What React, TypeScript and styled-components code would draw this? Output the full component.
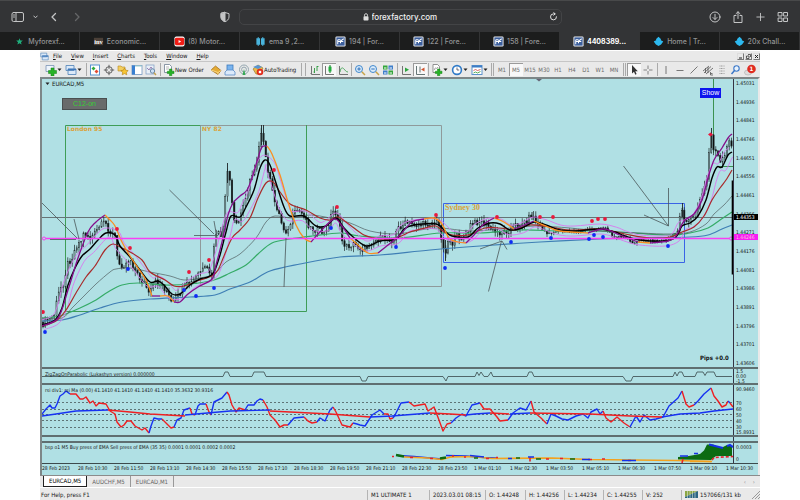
import React from "react";
import styled, { createGlobalStyle, css } from "styled-components";

const BG = "#b0e0e4";
const UI = '"DejaVu Sans Condensed", "DejaVu Sans", sans-serif';

const Global = createGlobalStyle`
  * { box-sizing: border-box; }
  body { margin: 0; background: #fff; font-family: Inter, sans-serif; }
  button, input { font: inherit; color: inherit; background: none; border: 0; padding: 0; margin: 0; }
  svg { display: block; }
`;

/* ---------- browser ---------- */

const Browser = styled.header`
  background: #333436;
  border-top: 1px solid #48494a;
`;
const NavBar = styled.div`
  display: grid;
  grid-template-columns: 1fr minmax(0, 323px) 1fr;
  align-items: center;
  height: 31px;
  padding: 0 11px;
  color: #c4c5c6;
`;
const NavGroup = styled.div<{ $end?: boolean; $gap: number }>`
  display: flex;
  align-items: center;
  gap: ${(p) => p.$gap}px;
  justify-content: ${(p) => (p.$end ? "flex-end" : "flex-start")};
`;
const IconButton = styled.button<{ $dim?: boolean; $push?: boolean }>`
  display: flex;
  opacity: ${(p) => (p.$dim ? 0.35 : 1)};
  ${(p) => p.$push && css`margin-left: auto; margin-right: 8px;`}
`;
const Address = styled.div`
  display: flex;
  align-items: center;
  justify-content: center;
  gap: 3px;
  height: 16px;
  position: relative;
  border: 1px solid #434446;
  border-radius: 5px;
  color: #f0f0f0;
  font-size: 8px;
  font-weight: 500;
  & > button { position: absolute; right: 3px; }
`;
const Url = styled.input`
  width: 66px;
  height: 12px;
  outline: none;
`;
const Tabs = styled.nav`
  display: grid;
  grid-template-columns: repeat(10, 1fr);
  height: 18px;
  background: #1c1d1d;
`;
const Tab = styled.button<{ $active?: boolean }>`
  display: flex;
  align-items: center;
  justify-content: center;
  gap: 3px;
  border-right: 1px solid #333435;
  background: ${(p) => (p.$active ? "#333436" : "transparent")};
  color: ${(p) => (p.$active ? "#fff" : "#929394")};
  font-size: 7px;
  font-weight: ${(p) => (p.$active ? 700 : 500)};
  white-space: nowrap;
`;

const Line = ({ w = 12, h = 12, vb = "0 0 12 12", children }: { w?: number; h?: number; vb?: string; children: React.ReactNode }) => (
  <svg width={w} height={h} viewBox={vb} fill="none" stroke="currentColor" strokeWidth="1" strokeLinecap="round" strokeLinejoin="round">
    {children}
  </svg>
);

const favicons: Record<string, React.ReactNode> = {
  star: <path d="M6 2.4l1 2.5 2.6.1-2 1.7.7 2.6L6 7.9 3.7 9.3l.7-2.6-2-1.7L5 4.9z" fill="#1fae7c" />,
  inv: (
    <>
      <rect x="1" y="2" width="10" height="8" fill="#4b4038" />
      <text x="6" y="8.6" textAnchor="middle" fontFamily="Liberation Serif" fontWeight="700" fontSize="7" fill="#fff">inv</text>
    </>
  ),
  tube: (
    <>
      <rect x=".5" y=".5" width="11" height="11" rx="2" fill="#fff" />
      <rect x="1" y="2" width="10" height="8" rx="1.5" fill="#f01d16" />
      <path d="M5 4.3v3.4L7.8 6z" fill="#fff" />
    </>
  ),
  candles: <path d="M1.500 2.500h4v7h-4zM6.500 2.500h4v7h-4zM3 1h1v10H3zM8 1h1v10H8z" fill="#49b4dc" />,
  ff: (
    <>
      <rect x=".5" y=".5" width="11" height="11" rx="1.5" fill="#f3f5f8" />
      <rect x="1.5" y="1.5" width="9" height="9" fill="#3c5f9c" />
      <path d="M3 4h3M3 6h2.500M3 4v5M6 8V5.5L9.500 3M6.500 6H9" stroke="#fff" strokeWidth="1.100" fill="none" />
    </>
  ),
  ship: <path d="M6 .8l2.600 2.400v1.300L11.200 6 8.800 9.300 6 11 3.200 9.300.8 6l2.600-1.500V3.200z" fill="#2db9ef" />,
};
const tabList: [string, string][] = [
  ["star", "Myforexf..."],
  ["inv", "Economic..."],
  ["tube", "(8) Motor..."],
  ["candles", "ema 9 ,2..."],
  ["ff", "194 | For..."],
  ["ff", "122 | Fore..."],
  ["ff", "158 | Fore..."],
  ["ff", "4408389..."],
  ["ship", "Home | Tr..."],
  ["ship", "20x Chall..."],
];

/* ---------- terminal ---------- */

const Terminal = styled.main`
  margin: 1px 5% 0;
  background: #e9e9e9;
  font-family: ${UI};
  font-size: 6px;
  line-height: 8px;
  color: #161616;
`;
const MenuBar = styled.div`
  display: flex;
  align-items: center;
  height: 10px;
`;
const MenuItem = styled.button`
  margin-left: 4px;
  margin-right: 5px;
  &::first-letter { text-decoration: underline; }
`;
const WindowButtons = styled.div`
  display: flex;
  gap: 1px;
  margin-left: auto;
`;
const WindowButton = styled.button`
  display: flex;
  width: 7px;
  height: 7px;
  border: 1px solid #777;
  border-top-color: #ddd;
  border-left-color: #ddd;
`;
const ToolBar = styled.div`
  display: flex;
  align-items: center;
  height: 16px;
  overflow: hidden;
  border-top: 1px solid #c6c6c6;
  padding-left: 4px;
`;
const Tool = styled.button<{ $pressed?: boolean; $w?: number }>`
  display: flex;
  flex: none;
  align-items: center;
  justify-content: ${(p) => (p.$w ? "flex-start" : "center")};
  width: ${(p) => p.$w ?? 14}px;
  height: 13px;
  padding-left: ${(p) => (p.$w ? 1 : 0)}px;
  white-space: nowrap;
  ${(p) => p.$pressed && css`
    background: #f8f8f8;
    box-shadow: inset 1px 1px 0 #9a9a9a;
  `}
`;
const Frame = styled(Tool)`
  color: #6c6c6c;
  font-size: 6px;
`;
const Divider = styled.span<{ $w: number; $double?: boolean }>`
  flex: none;
  width: ${(p) => p.$w}px;
  height: 13px;
  background: linear-gradient(#aaa, #aaa) ${(p) => (p.$double ? "30%" : "50%")} 0 / 1px 100% no-repeat
    ${(p) => p.$double && ", linear-gradient(#aaa, #aaa) 80% 0 / 1px 100% no-repeat"};
`;

const ChartFrame = styled.section`
  background: ${BG};
  border: solid #7d8788;
  border-width: 2px 0 0 2px;
  border-right: 2px solid #e9e9e9;
`;
const Pane = styled.div<{ $last?: boolean }>`
  display: grid;
  grid-template-columns: minmax(0, 1fr) 24px;
  position: relative;
  border-bottom: ${(p) => (p.$last ? "1px solid #3d4a4c" : "2px solid #5f6f71")};
`;
const Plot = styled.svg`
  width: 100%;
  height: auto;
  border-right: 1px solid #334;
`;
const Scale = styled.div`
  position: relative;
  display: flex;
  flex-direction: column;
  justify-content: space-between;
  padding: 1px 0 0 2px;
  font-size: 5px;
  line-height: 7px;
  white-space: nowrap;
  min-height: 0;
`;
const Mark = styled.span<{ $top: number; $bg?: string; $fg?: string }>`
  position: absolute;
  left: 0;
  right: 0;
  top: ${(p) => p.$top}%;
  padding-left: 2px;
  line-height: ${(p) => (p.$bg ? 6 : 5)}px;
  transform: translateY(-50%);
  background: ${(p) => p.$bg ?? "transparent"};
  color: ${(p) => p.$fg ?? "inherit"};
`;
const PaneTitle = styled.span<{ $top?: number }>`
  position: absolute;
  left: 3px;
  top: ${(p) => p.$top ?? 2}px;
  font-size: 5px;
  line-height: 7px;
  white-space: nowrap;
`;
const ChartTitle = styled(PaneTitle)`
  display: flex;
  align-items: center;
  gap: 2px;
  font-size: 6px;
`;
const IndicatorButton = styled.button`
  position: absolute;
  left: 20px;
  top: 19px;
  width: 45px;
  height: 12px;
  border: 1px solid #4a4f50;
  background: #696b6b;
  color: #35d035;
  font-family: "Liberation Sans", sans-serif;
  font-size: 7px;
  line-height: 10px;
`;
const ShowButton = styled.button`
  position: absolute;
  right: 37px;
  top: 9px;
  width: 21px;
  height: 10px;
  background: #0d14ee;
  color: #fff;
  font-family: "Liberation Sans", sans-serif;
  font-size: 7px;
`;
const TimeAxis = styled.div`
  display: grid;
  grid-template-columns: repeat(19, minmax(0, 36fr)) minmax(0, 32fr);
  height: 11px;
  font-size: 5px;
  line-height: 9px;
  white-space: nowrap;
`;
const Sheets = styled.div`
  display: flex;
  height: 13px;
  border-top: 1px solid #8b8b8b;
  border-bottom: 1px solid #fff;
`;
const Sheet = styled.button<{ $active?: boolean }>`
  height: 11px;
  padding: 0 5px;
  border-right: 1px solid ${(p) => (p.$active ? "#222" : "#999")};
  color: ${(p) => (p.$active ? "#000" : "#666")};
  ${(p) => p.$active && css`
    background: #fff;
    border-left: 1px solid #222;
    border-bottom: 1px solid #222;
    margin-left: 3px;
  `}
`;
const Scrollers = styled.div`
  display: flex;
  gap: 7px;
  margin-left: auto;
  padding-right: 5px;
  color: #888;
`;
const Status = styled.footer`
  display: grid;
  grid-template-columns: 327fr 62fr 56fr 40fr 39fr 39fr 39fr 118fr;
  align-items: center;
  height: 13px;
  white-space: nowrap;
`;
const Cell = styled.span<{ $first?: boolean }>`
  display: flex;
  align-items: center;
  gap: 2px;
  height: 10px;
  padding-left: ${(p) => (p.$first ? 1 : 3)}px;
  border-left: ${(p) => (p.$first ? "0" : "1px solid #b4b4b4")};
`;
const Connection = styled(Cell)`
  margin-left: 16px;
`;
const Grip = styled.svg`
  margin-left: auto;
`;

/* ---------- toolbar icons ---------- */

const icons: Record<string, React.ReactNode> = {
  newChart: <><path d="M1 1.500h8v6H1z" fill="#eef4fb" stroke="#7a93b5" strokeWidth=".8" /><path d="M6 4h3v2.500h2.500v3H9V12H6V9.500H3.500v-3H6z" fill="#27b227" stroke="#128312" strokeWidth=".5" /></>,
  profiles: <><path d="M1 1.500h8v5H1zM3 5h8v5.500H3z" fill="#dbe9f8" stroke="#5d8cbd" strokeWidth=".9" /><path d="M3 5.500h8" stroke="#3d77bb" strokeWidth="1.500" /></>,
  market: <><rect x="1.500" y="1" width="9" height="10" fill="#fff" stroke="#5b94d0" /><path d="M4.500 2.500l2 2-2 2-2-2z" fill="#2faa3a" /><path d="M7.500 5.500l2 2-2 2-2-2z" fill="#e34a32" /></>,
  target: <g stroke="#555" strokeWidth=".9" fill="none"><circle cx="6" cy="6" r="3.300" /><path d="M6 .8v4M6 7.200v4M.8 6h4M7.200 6h4" /></g>,
  folders: <><path d="M1 2h3l1 1h3v4H1z" fill="#f3ce60" stroke="#b88c1e" strokeWidth=".6" /><path d="M7.500 4l1.200 2.200 2.500.4-1.800 1.700.4 2.500-2.300-1.200-2.300 1.200.4-2.500-1.800-1.700 2.500-.4z" fill="#f7c531" stroke="#b07d12" strokeWidth=".6" /></>,
  navigator: <><rect x="1" y="1.500" width="10" height="9" fill="#fff" stroke="#7396c0" strokeWidth=".8" /><path d="M1 1.500h3v9H1z" fill="#397fd0" /><path d="M4 2h7" stroke="#9cc" /></>,
  tester: <><rect x="1" y="1" width="8" height="9" fill="#e9eff6" stroke="#7c9cc2" strokeWidth=".7" /><path d="M2 4l2 2 2-3 2 3" stroke="#759" strokeWidth=".7" fill="none" /><circle cx="7.500" cy="7" r="2.200" fill="#cce0f5" stroke="#6c8aa8" /><path d="M9 8.700l2 2.300" stroke="#c3a14e" strokeWidth="1.400" /></>,
  order: <><path d="M1.500.5h5l2 2v6h-7z" fill="#fff" stroke="#6f7f92" strokeWidth=".8" /><path d="M3 3h3M3 5h3" stroke="#888" strokeWidth=".6" /><path d="M6.500 5h2.300v2.200H11v2.300H8.800v2.300H6.500V9.500H4.300V7.200h2.200z" fill="#25b325" stroke="#128312" strokeWidth=".5" /></>,
  gold: <><path d="M1 6l4.500-4L11 6.500l-3 4z" fill="#e4ab35" stroke="#9c6714" strokeWidth=".7" /><path d="M1 6l7 2.500 3-2M8 8.500v2" stroke="#fbe29a" strokeWidth=".8" fill="none" /></>,
  editor: <><rect x="3" y="1" width="6" height="6" fill="#7ab4ee" stroke="#3d7abd" strokeWidth=".8" /><path d="M1 8l2-2h6l2 2v3H1z" fill="#dceafa" stroke="#5b8dc6" strokeWidth=".8" /></>,
  signal: <><g fill="none" stroke="#8a9ea8" strokeWidth=".9"><circle cx="6" cy="5.500" r="4.500" /><circle cx="6" cy="5.500" r="2.400" /></g><path d="M6 5l1.500 6h-3z" fill="#35a852" /></>,
  auto: <><path d="M1 5l5-4 5 3-3 6H4z" fill="#e9bb4b" stroke="#8f701e" strokeWidth=".6" /><path d="M1 3l5-2 4 2-4 2z" fill="#5a95d1" /><circle cx="8" cy="8" r="3.300" fill="#e02c1c" /><rect x="6.800" y="6.800" width="2.400" height="2.400" fill="#fff" /></>,
  bars: <g fill="none" strokeWidth=".9"><path d="M2.500 2v8.500H11M1.500 9.500h1" stroke="#666" /><path d="M5.500 4v5M8 2v5M8 2.500h1.500M4.500 8h1" stroke="#299a3a" /></g>,
  candle: <><path d="M2.500 2v8.500H11" stroke="#666" strokeWidth=".9" fill="none" /><path d="M7 1v8" stroke="#137a25" /><rect x="5.500" y="2.500" width="3" height="5" rx=".5" fill="#22ad3e" /></>,
  line: <g fill="none" strokeWidth=".9"><path d="M2.500 2v8.500H11" stroke="#666" /><path d="M3 8c1-6 3-4 4-3s2 3 4 3" stroke="#46a557" /></g>,
  zoomIn: <><circle cx="5" cy="5" r="3.500" fill="#d9ebfb" stroke="#4288cc" /><path d="M5 3.300v3.400M3.300 5h3.400" stroke="#2e6fb8" /><path d="M7.800 7.800L11 11" stroke="#c7a247" strokeWidth="1.500" /></>,
  zoomOut: <><circle cx="5" cy="5" r="3.500" fill="#d9ebfb" stroke="#4288cc" /><path d="M3.300 5h3.400" stroke="#2e6fb8" /><path d="M7.800 7.800L11 11" stroke="#c7a247" strokeWidth="1.500" /></>,
  tile: <><path d="M1 1.500h4.500v4H1zM6.500 6.500H11v4H6.500z" fill="#35a63d" /><path d="M6.500 1.500H11v4H6.500zM1 6.500h4.500v4H1z" fill="#3f7fca" /><path d="M2 4h2.500M7.500 4H10M2 9h2.500M7.500 9H10" stroke="#fff" /></>,
  scroll: <><path d="M2.500 2v8.500H11" stroke="#666" strokeWidth=".9" fill="none" /><path d="M5 3.500v4.500l4-2.200z" fill="#2ba43d" /></>,
  shift: <><path d="M2.500 2v8.500H11M6 2.500v6" stroke="#566" strokeWidth=".9" fill="none" /><path d="M10.500 3.500v4L7 5.500z" fill="#d2542f" /></>,
  indicator: <><path d="M2 .5h4.500l2 2v6H2z" fill="#fff" stroke="#777" strokeWidth=".8" /><path d="M3.500 6c1-5 2 1 3.500-3" stroke="#777" strokeWidth=".7" fill="none" /><path d="M6.500 5h2.300v2.200H11v2.300H8.800v2.300H6.500V9.500H4.300V7.200h2.200z" fill="#25b325" stroke="#128312" strokeWidth=".5" /></>,
  clock: <><circle cx="6" cy="6" r="4.400" fill="#fff" stroke="#317bc8" strokeWidth="1.600" /><path d="M6 3.500V6h2.200" stroke="#445" strokeWidth=".8" fill="none" /></>,
  template: <><rect x="1" y="1.500" width="10" height="9" fill="#fff" stroke="#5d91cb" /><path d="M1 2.500h10" stroke="#3d7dc6" strokeWidth="2" /><path d="M2.500 6.500l2-1 2 1 3-1" stroke="#c44" strokeWidth=".8" fill="none" /><path d="M2.500 9l2-1 2 1 3-1.500" stroke="#393" strokeWidth=".8" fill="none" /></>,
  cursor: <path d="M4 1v8.500l2-1.800 1.300 3 1.300-.6-1.300-2.900h2.500z" fill="#333" />,
  cross: <path d="M6 1.500v3.500M6 7v3.500M1.500 6H5M7 6h3.500" stroke="#777" strokeWidth=".9" />,
  vline: <path d="M6 2v8" stroke="#777" />,
  hline: <path d="M2.500 6.500h7" stroke="#777" />,
  trend: <path d="M2.500 9.500l7-7" stroke="#777" />,
  channel: <path d="M1 7l6-5M2 9l7-6.500M4 10l7-6M3.500 4v5M6 3v6M8.500 8v3h2.500M8.500 9.500h2" stroke="#555" strokeWidth=".8" fill="none" />,
  fib: <path d="M3.500 2h5M3.500 4.500h5M3.500 7h5M3.500 9.500h5" stroke="#888" strokeWidth=".8" strokeDasharray="1 .5" />,
  search: <><circle cx="6.500" cy="4.500" r="2.700" fill="#e8f2fd" stroke="#3b78c7" strokeWidth="1.100" /><path d="M4.500 6.600L1.500 10" stroke="#3b78c7" strokeWidth="1.500" /></>,
  alert: <><ellipse cx="4" cy="8.500" rx="3.500" ry="2.500" fill="#ddd" stroke="#aaa" strokeWidth=".6" /><circle cx="7.500" cy="5" r="4.300" fill="#df2c20" /><text x="7.500" y="7.300" textAnchor="middle" fontSize="6" fontWeight="700" fill="#fff">1</text></>,
};
const Glyph = ({ n, size = 12 }: { n: string; size?: number }) => <svg width={size} height={size} viewBox="0 0 12 12">{icons[n]}</svg>;
const Caret = () => <svg width="5" height="4" viewBox="0 0 5 4"><path d="M.5.500h4L2.500 3z" fill="#222" /></svg>;
const tools = (names: string[], pressed?: string) =>
  names.map((n) => <Tool key={n} aria-label={n} $pressed={n === pressed}><Glyph n={n} /></Tool>);
const DropTool = ({ n }: { n: string }) => <Tool $w={20} aria-label={n}><Glyph n={n} /><Caret /></Tool>;

/* ---------- chart data ---------- */

type P = [number, number];
const pts = (s: string): P[] => s.trim().split(/\s+/).map((p) => p.split(",").map(Number) as P);

const price = pts(`42,325 48,320 54,316 58,295 61,287 64,283 67,264 72,258 76,246 82,240 84,232 90,238 96,232 100,226 105,222 110,232 115,236 117,257 120,265
 125,265 130,258 135,270 140,279 145,283 149,295 155,282 162,285 167,292 172,304 178,297 184,286 192,283 197,275 202,270 208,269 212,278 214,245
 217,233 222,236 224,218 227,172 229,175 231,195 234,220 238,226 242,205 246,200 250,178 254,170 258,155 261,136 263,138 266,160 270,180 274,200 278,210
 283,228 288,232 292,218 297,210 304,215 310,228 318,230 326,234 330,218 334,210 338,218 342,240 346,247 354,244 364,250 372,242 382,238 394,240 398,228
 406,223 418,225 430,223 438,222 441,235 444,252 446,250 449,238 453,244 456,235 462,238 468,232 471,224 480,221 488,226 494,232 502,233 510,230 516,225
 524,223 532,214 536,222 542,228 548,235 556,230 570,232 590,230 604,227 612,235 625,238 632,242 645,240 655,241 665,240 672,237 678,232 680,215 682,208
 685,224 690,220 696,212 700,198 704,190 707,175 709,155 711,135 714,150 720,160 725,155 728,140 732,148`);
const black = pts(`42,325 55,320 62,308 68,285 75,268 82,256 90,249 98,240 106,233 115,235 120,246 130,257 140,270 150,282 158,281 164,285 172,294 180,294 190,285
 200,279 208,277 214,272 220,255 226,232 231,216 240,217 246,207 254,190 260,168 265,160 270,165 276,183 284,207 290,216 304,216 316,226 326,226 336,218
 344,228 352,236 366,246 380,241 396,239 404,229 414,225 436,224 446,232 452,236 468,237 478,228 490,223 500,224 510,230 522,228 534,222 546,225 560,230
 575,231 600,229 615,232 625,236 640,240 665,241 676,237 682,226 690,223 698,216 706,200 712,178 717,167 722,167 728,155 732,152`);
const brown = pts(`42,326 56,321 66,310 76,293 86,277 95,266 105,250 113,244 122,248 130,252 142,260 150,272 165,280 174,286 184,286 200,280 212,276 218,270 224,256
 232,238 240,230 250,218 258,198 266,183 273,182 280,192 290,204 306,210 320,218 330,220 338,217 350,225 364,235 380,239 396,238 410,232 425,228 436,226 448,234
 468,235 485,228 500,228 515,230 530,225 550,227 570,230 600,229 625,234 650,238 670,237 682,232 694,227 704,216 712,200 720,188 726,180 732,170`);
const gray = pts(`42,318 62,318 72,308 84,296 96,284 110,272 116,269 130,268 150,272 170,276 184,280 200,278 214,274 226,262 240,254 256,238 266,222 275,216 292,218
 310,215 330,218 350,223 370,231 396,234 420,230 440,228 470,231 500,229 535,226 570,228 600,231 640,233 670,234 690,232 706,224 714,214 724,205 732,196`);
const green = pts(`42,318 60,316 80,308 96,300 108,292 122,285 138,283 165,285 190,284 214,280 230,273 246,265 258,254 272,243 290,239 312,236 340,233 360,236 400,238
 440,233 480,233 520,230 560,231 600,231 665,235 690,233 708,228 720,220 732,212`);
const blue = pts(`42,321 62,320 80,315 100,308 122,302 150,299 190,297 215,295 230,289 250,282 270,271 300,264 340,257 380,255 430,250 480,246 540,242 600,239 640,238
 690,237 708,235 722,229 732,225`);
const fast: [string, string][] = [
  ["p", "42,326 58,318 68,290 78,258 88,232 96,222 105,215"],
  ["o", "105,215 110,220 115,226 122,242 130,256 138,268 146,280 152,296"],
  ["p", "152,296 160,296"],
  ["o", "160,296 168,296 174,302"],
  ["p", "174,302 180,302 188,294 198,287 212,279 216,265 222,242 228,215 233,203 240,196 247,190 253,175 258,158 262,147 267,146"],
  ["o", "267,146 272,154 280,175 288,202 296,225 304,238 311,242"],
  ["p", "311,242 320,232 334,219 342,226 350,238"],
  ["o", "350,238 358,245 368,253 378,253"],
  ["p", "378,253 388,245 400,235 412,222 424,219"],
  ["o", "424,219 434,218 442,224 449,238 458,242 466,243"],
  ["p", "466,243 474,235 484,224 494,218"],
  ["o", "494,218 504,222 514,229"],
  ["p", "514,229 524,225 534,221"],
  ["o", "534,221 548,227 560,231 588,233"],
  ["p", "588,233 604,229 620,235 638,242"],
  ["o", "638,242 650,243"],
  ["p", "650,243 668,241 676,236 684,221 694,214 702,200 708,178 714,160 722,148 728,138 732,134"],
];

const smooth = (p: P[]) => {
  let d = `M${p[0]}`;
  for (let i = 0; i < p.length - 1; i++) {
    const a = p[i - 1] ?? p[i], b = p[i], c = p[i + 1], e = p[i + 2] ?? c;
    d += `C${b[0] + (c[0] - a[0]) / 6},${b[1] + (c[1] - a[1]) / 6} ${c[0] - (e[0] - b[0]) / 6},${c[1] - (e[1] - b[1]) / 6} ${c}`;
  }
  return d;
};
const offset = (p: P[], k: number): P[] =>
  p.map((q, i) => {
    const a = p[i - 1] ?? q, b = p[i + 1] ?? q;
    const dx = b[0] - a[0], dy = b[1] - a[1], l = Math.hypot(dx, dy) || 1;
    return [q[0] - (dy / l) * k, q[1] + (dx / l) * k];
  });
const at = (p: P[], x: number) => {
  const i = Math.max(1, p.findIndex((q) => q[0] >= x));
  const [a, b] = [p[i - 1], p[i]];
  return a[1] + ((b[1] - a[1]) * (x - a[0])) / (b[0] - a[0]);
};
const noise = (n: number) => {
  const v = Math.sin(n * 12.9898) * 43758.5453;
  return v - Math.floor(v) - 0.5;
};
const candles = Array.from({ length: 307 }, (_, i) => {
  const x = 43 + i * 2.25;
  const calm = x > 550 && x < 672 ? 0.5 : 1;
  const open = at(price, Math.max(42, x - 2.25)) + noise(i) * 6 * calm;
  const close = at(price, x) + noise(i + 1) * 6 * calm;
  const top = Math.min(open, close), bottom = Math.max(open, close);
  return {
    x, top, h: Math.max(1, bottom - top), up: close < open,
    high: top - (noise(i + 500) + 0.5) * 6 * calm,
    low: bottom + (noise(i + 900) + 0.5) * 6 * calm,
  };
});

const reds = pts("117,229 130,248 189,272 209,260 274,170 337,207 436,215 497,217 540,217 553,217 592,221 598,219 605,219 43,312");
const blues = pts("45,332 128,269 184,290 196,296 214,288 331,228 396,247 445,268 511,242 551,238 589,239 594,235 603,237 668,246");

const rsi: [string, string][] = [
  ["b", "42,414 46,409 50,405 52,408 55,408 57,404 60,396 63,394 66,391 70,394"],
  ["r", "70,394 76,394 80,399 83,399 86,397 90,403 93,401 96,406 99,403 106,404 110,411 115,414 117,422 121,427 124,425 127,421 131,421 135,426 142,430 145,428 149,433"],
  ["b", "149,433 151,426 154,418 158,419 162,419"],
  ["r", "162,419 167,424 171,428 174,427"],
  ["b", "174,427 177,420 181,418 184,410 190,408"],
  ["r", "190,408 192,414 195,415"],
  ["b", "195,415 198,406 200,404 206,404"],
  ["r", "206,404 209,412 211,415"],
  ["b", "211,415 214,402 222,398 227,392"],
  ["r", "227,392 229,395 232,405 236,412 239,408 245,410"],
  ["b", "245,410 248,405 254,405 257,401 260,399 263,400"],
  ["r", "263,400 267,407 270,415 275,420 280,427 284,425 288,425"],
  ["b", "288,425 294,418 304,417"],
  ["r", "304,417 308,421 312,423 317,422"],
  ["b", "317,422 320,418 325,421 330,410 333,407"],
  ["r", "333,407 336,412 342,425 350,427 353,423"],
  ["b", "353,423 357,424 360,425 365,426 372,415 380,410 384,414"],
  ["r", "384,414 388,414 390,419 393,418"],
  ["b", "393,418 395,415 401,403 409,402"],
  ["r", "409,402 414,406 425,404 428,411 434,407 439,420 443,431 447,424 451,423"],
  ["b", "451,423 456,418 462,414 466,416 472,405 480,403"],
  ["r", "480,403 484,409 490,409 497,417 500,421 508,420"],
  ["b", "508,420 513,413 520,408 526,410 531,401"],
  ["r", "531,401 534,412 541,418 547,424"],
  ["b", "547,424 551,414 556,416 562,419 568,420 576,416 583,414 588,418 591,412 597,409 600,414 603,411"],
  ["r", "603,411 606,418 611,422 617,417 624,423 630,427"],
  ["b", "630,427 636,416 640,422 644,415 650,420 656,419 663,417 669,406 678,398 682,391"],
  ["r", "682,391 686,404 689,407 694,405"],
  ["b", "694,405 698,401 704,394 711,388"],
  ["r", "711,388 714,396 718,401 722,407 726,405 728,401"],
  ["b", "728,401 730,403"],
  ["r", "730,403 733,407"],
  ["b", "42,416 56,414 76,411 108,410"],
  ["r", "108,410 130,412 150,414 185,416"],
  ["b", "185,415 230,411 270,410"],
  ["r", "270,411 330,414 370,417"],
  ["b", "370,417 392,416 430,413"],
  ["r", "430,413 450,414 466,415"],
  ["b", "466,415 475,414 490,413"],
  ["r", "490,413 510,414"],
  ["b", "510,414 530,413"],
  ["r", "530,413 590,414 630,416 662,417"],
  ["b", "662,417 680,414 700,413 714,411 733,409"],
];
const RB: Record<string, string> = { b: "#1732f2", r: "#ee1f22" };

const prices = ["1.45031", "1.44936", "1.44841", "1.44746", "1.44651", "1.44556", "1.44461", "1.44366", "1.44271", "1.44176", "1.44081", "1.43986", "1.43891", "1.43796", "1.43701", "1.43606"];
const times = ["28 Feb 2023", "28 Feb 10:30", "28 Feb 11:50", "28 Feb 13:10", "28 Feb 14:30", "28 Feb 15:50", "28 Feb 17:10", "28 Feb 18:30", "28 Feb 19:50", "28 Feb 21:10", "28 Feb 22:30", "28 Feb 23:50", "1 Mar 01:10", "1 Mar 02:30", "1 Mar 03:50", "1 Mar 05:10", "1 Mar 06:30", "1 Mar 07:50", "1 Mar 09:10", "1 Mar 10:30"];

const PriceChart = () => (
  <Plot viewBox="42 79 691 288" role="img" aria-label="EURCAD five minute chart">
    <g fill="none">
      <path d="M65.500 125.500H306.500V311.500H65.500z" stroke="#3f9d57" />
      <path d="M200.500 125.500H441.500V286.500H200.500z" stroke="#8f9a9b" />
      <path d="M306.500 125V311" stroke="#3f9d57" />
      <path d="M443.500 203.500H684.500V262.500H443.500z" stroke="#3a63e6" />
      <path d="M42 217.500H733" stroke="#667476" />
      <path d="M713.500 79V153M718 166.500H733" stroke="#3b9150" />
    </g>
    <path d="M536 79h6l-3 2.500z" fill="#667" />
    <g fontFamily="DejaVu Sans" fontWeight="700" fontSize="6" fill="#dba239">
      <text x="67" y="131">London 95</text>
      <text x="202" y="131">NY 82</text>
      <text x="445" y="210" fontFamily="Liberation Serif" fontSize="8">Sydney 30</text>
    </g>
    <g stroke="#1c2526">
      {candles.map((c) => (
        <g key={c.x}>
          <path d={`M${c.x} ${c.high}V${c.low}`} strokeWidth=".7" />
          <rect x={c.x - 0.6} y={c.top} width="1.200" height={c.h} fill={c.up ? "#8fb3b6" : "#000"} strokeWidth={c.up ? 0.4 : 0.7} />
        </g>
      ))}
      <path d="M227.500 163v20M261.500 125v20M263.500 125v20M711.500 128v20M445.500 240v21M682.500 203v14M532 212v8" strokeWidth=".9" />
    </g>
    <g fill="none" strokeLinejoin="round">
      <path d={smooth(blue)} stroke="#3f7fb5" strokeWidth="1.200" />
      <path d={smooth(green)} stroke="#35ab67" strokeWidth="1.200" />
      <path d={smooth(gray)} stroke="#4f5c5e" strokeWidth=".7" />
      <path d={smooth(offset(black, -5))} stroke="#d977ee" strokeWidth=".9" />
      <path d={smooth(offset(black, 5))} stroke="#d977ee" strokeWidth=".9" />
      <path d={smooth(brown)} stroke="#a82a2a" strokeWidth="1.200" />
      <path d={smooth(black)} stroke="#000" strokeWidth="1.400" />
      {fast.map(([c, s]) => <path key={s} d={smooth(pts(s))} stroke={c === "p" ? "#850f8c" : "#fa8f22"} strokeWidth="1.300" />)}
      <path d="M42 238.500H733" stroke="#f83ff4" strokeWidth="1.600" />
      <circle cx="44" cy="238.500" r="1.500" fill={BG} stroke="#f83ff4" />
      <circle cx="731" cy="238.500" r="1.500" fill={BG} stroke="#f83ff4" />
      <g stroke="#4a5759" strokeWidth=".8">
        <path d="M42 203L77 238M74 219l5 20M50 239.500h26M169.500 190L214 234M214 221l3 17M194 235.500h24" />
        <path d="M286 238L284 287M488.500 291.500L501.500 241M480 249l22-8 5 8.500" />
        <path d="M623.500 166L668.500 226M668.500 188v38M644 215l24.500 11" />
      </g>
    </g>
    <g fill="#e8193c">{reds.map((p, i) => <circle key={i} cx={p[0]} cy={p[1]} r="1.900" />)}<path d="M708 134.500l2.500-2 2.500 2-2.500 2z" /></g>
    <g fill="#0f2bf5">{blues.map((p, i) => <circle key={i} cx={p[0]} cy={p[1]} r="1.900" />)}</g>
    <text x="700" y="360" fontFamily="DejaVu Sans Condensed" fontWeight="700" fontSize="6" fill="#111">Pips +0.0</text>
    <path d="M732.500 180.500v94" stroke="#000" strokeWidth="1.600" />
  </Plot>
);

const SignalPlot = () => (
  <Plot viewBox="42 369 691 14">
    <path fill="none" stroke="#46595b" strokeWidth=".9" d="M42 376.500H223l2-4.500h3l2 4.500H252l2-4.500h10l2 4.500H360l2 4.500h4l2-4.500H443l3 4.500 2-4.500H475l2-4.500 2 3.500 2-3.500 3 4.500h4l3-4.500 2 4.500H527l2-4.500h3l2 4.500H623l3 4.500h5l2-4.500H673l2-4.500 2 4 2-4h3l2 4.500H695l2-4.500h6l2 3.500 2-3.500h7l2 4.500H732" />
  </Plot>
);

const RsiPlot = () => (
  <Plot viewBox="42 385 691 50">
    <path d="M42 402.500H733M42 409.500H733M42 414.500H733M42 420.500H733M42 427.500H733" stroke="#5e7476" strokeDasharray="2 2" />
    <g fill="none" strokeWidth="1.400" strokeLinejoin="round">
      {rsi.map(([c, s]) => <polyline key={s} points={s} stroke={RB[c]} />)}
    </g>
  </Plot>
);

const BspPlot = () => (
  <Plot viewBox="42 443 691 20">
    <path d="M678 457l8-.5 14-2.500 4-3.500 3-6h6l8 3.500 6-3 5 1v10h-16l-5 4-33-.5z" fill="#0c6b12" />
    <g fill="none" strokeWidth="1.600">
      <path d="M398 455.500l16 1 16 1.500 12 1" stroke="#1630e8" />
      <path d="M404 457l24 1 14 1.500 12-3.500" stroke="#f3a21f" />
      <path d="M396 455l8 1.500M440 458.500l6-1" stroke="#0c6b12" strokeWidth="2.600" />
      <path d="M446 455.500l20 .5 6 .5 12 1 12 .5" stroke="#1630e8" />
      <path d="M450 457l22-.5 20 2 60-.5 38 1.500 88 1 33 1" stroke="#f3a21f" />
      <path d="M410 457.500h3M430 458.500h3M452 456h2M464 457h2M486 458.500h3M496 457.500h2M530 457.500v4M546 459h3M560 458.500h3M588 459.500h4M602 459h3M628 460.500h3M392 456.500h2M683 459l-1 4" stroke="#e8222a" />
      <path d="M470 455.500l14 1.500M508 458.500h4M528 457h6M582 459.500h8M622 460.500h14M680 456h8M694 453.500h4" stroke="#1630e8" />
      <path d="M474 458h4M516 458h4M536 459h5M570 459h5" stroke="#0c6b12" />
      <path d="M709 444.500l6 1.500 8 2M727 446l3-1 3 2" stroke="#1630e8" strokeWidth="2.200" />
      <path d="M712 460l2-2.500 20-1" stroke="#e8222a" strokeDasharray="3 2" />
      <path d="M690 461.500h22" stroke="#f3a21f" />
    </g>
  </Plot>
);

export default function App() {
  return (
    <>
      <Global />
      <Browser>
        <NavBar>
          <NavGroup $gap={8}>
            <IconButton aria-label="Sidebar"><Line w={14} h={12} vb="0 0 14 12"><rect x="1" y="1.500" width="11.500" height="9" rx="1.500" /><path d="M5 1.500v9M2.500 4h1M2.500 6h1" /></Line></IconButton>
            <IconButton aria-label="Tab groups"><Line w={5} h={6} vb="0 0 5 6"><path d="M.8 2l1.700 1.800L4.200 2" /></Line></IconButton>
            <IconButton aria-label="Back"><Line w={16}><path d="M7.500 2.500L4 6l3.500 3.500" strokeWidth="1.300" /></Line></IconButton>
            <IconButton aria-label="Forward" $dim><Line w={14}><path d="M4.500 2.500L8 6 4.500 9.500" strokeWidth="1.300" /></Line></IconButton>
            <IconButton aria-label="Privacy report" $push><Line><path d="M6 1.500l4 1.200V6c0 2.300-2 4-4 4.800C4 10 2 8.300 2 6V2.700z" /><path d="M6 1.500v9.300C4 10 2 8.300 2 6V2.700z" fill="currentColor" /></Line></IconButton>
          </NavGroup>
          <Address>
            <svg width="6" height="8" viewBox="0 0 6 8"><rect x=".5" y="3.300" width="5" height="4.200" rx=".8" fill="#ddd" /><path d="M1.500 3.500V2.200a1.500 1.500 0 013 0v1.300" stroke="#ddd" fill="none" strokeWidth=".9" /></svg>
            <Url aria-label="Address" defaultValue="forexfactory.com" />
            <IconButton aria-label="Reload"><Line w={9} h={9}><path d="M10 6.300A4 4 0 116 2.500h2M6.300.8L8.200 2.500 6.300 4.300" strokeWidth="1.200" /></Line></IconButton>
          </Address>
          <NavGroup $end $gap={11}>
            <IconButton aria-label="Downloads"><Line><circle cx="6" cy="6" r="5" /><path d="M6 3.300v5M4 6.500l2 2 2-2" /></Line></IconButton>
            <IconButton aria-label="Share"><Line><path d="M4 4.500H2v7h8v-7H8M6 7.500V.8M4 2.700L6 .8l2 1.900" /></Line></IconButton>
            <IconButton aria-label="New tab"><Line w={11}><path d="M6 2v8M2 6h8" /></Line></IconButton>
            <IconButton aria-label="Tab overview"><Line><path d="M1.500 1.500H5V5H1.500zM7 1.500h3.500V5H7zM1.500 7H5v3.500H1.500zM7 7h3.500v3.500H7z" /></Line></IconButton>
          </NavGroup>
        </NavBar>
        <Tabs>
          {tabList.map(([icon, label]) => (
            <Tab key={label} $active={label.startsWith("4408")}>
              <svg width="11" height="11" viewBox="0 0 12 12">{favicons[icon]}</svg>
              {label}
            </Tab>
          ))}
        </Tabs>
      </Browser>

      <Terminal>
        <MenuBar>
          <svg width="9" height="9" viewBox="0 0 12 12">{icons.profiles}</svg>
          {["File", "View", "Insert", "Charts", "Tools", "Window", "Help"].map((m) => <MenuItem key={m}>{m}</MenuItem>)}
          <WindowButtons>
            <WindowButton aria-label="Minimize"><svg width="5" height="5"><path d="M1 4h3" stroke="#222" /></svg></WindowButton>
            <WindowButton aria-label="Restore"><svg width="5" height="5"><path d="M2 .5h2.500V3M.5 2H3v2.500H.5z" stroke="#222" strokeWidth=".7" fill="none" /></svg></WindowButton>
            <WindowButton aria-label="Close"><svg width="5" height="5"><path d="M1 1l3 3M4 1L1 4" stroke="#222" /></svg></WindowButton>
          </WindowButtons>
        </MenuBar>
        <ToolBar>
          <DropTool n="newChart" /><DropTool n="profiles" />
          <Divider $w={4} />
          {tools(["market", "target", "folders", "navigator", "tester"])}
          <Divider $w={4} />
          <Tool $w={47}><Glyph n="order" />New Order</Tool>
          {tools(["gold", "editor", "signal"])}
          <Tool $w={48}><Glyph n="auto" />AutoTrading</Tool>
          <Divider $w={9} $double />
          {tools(["bars", "candle", "line"], "candle")}
          <Divider $w={3} />
          {tools(["zoomIn", "zoomOut", "tile"])}
          <Divider $w={4} />
          {tools(["scroll", "shift"], "shift")}
          <Divider $w={3} />
          <DropTool n="indicator" /><DropTool n="clock" /><DropTool n="template" />
          <Divider $w={5} $double />
          {["M1", "M5", "M15", "M30", "H1", "H4", "D1", "W1", "MN"].map((t) => <Frame key={t} $pressed={t === "M5"}>{t}</Frame>)}
          <Divider $w={6} $double />
          {tools(["cursor", "cross"], "cursor")}
          <Divider $w={4} />
          {tools(["vline", "hline", "trend", "channel", "fib", "search", "alert"])}
        </ToolBar>

        <ChartFrame>
          <Pane>
            <PriceChart />
            <Scale>
              {prices.map((p) => <span key={p}>{p}</span>)}
              <Mark $top={48} $bg="#000" $fg="#fff">1.44353</Mark>
              <Mark $top={55} $bg="#f81cf4" $fg="#fbd">1.44246</Mark>
            </Scale>
            <ChartTitle $top={1}><Caret />EURCAD,M5</ChartTitle>
            <IndicatorButton>C12-on</IndicatorButton>
            <ShowButton>Show</ShowButton>
          </Pane>
          <Pane>
            <SignalPlot />
            <Scale><Mark $top={14}>1.5</Mark><Mark $top={50}>0.00</Mark><Mark $top={86}>-1.5</Mark></Scale>
            <PaneTitle>ZigZagOnParabolic (Lukashyn version) 0.000000</PaneTitle>
          </Pane>
          <Pane>
            <RsiPlot />
            <Scale><Mark $top={8}>90.9460</Mark><Mark $top={36}>70</Mark><Mark $top={48}>60</Mark><Mark $top={60}>50</Mark><Mark $top={72}>40</Mark><Mark $top={83}>30</Mark><Mark $top={94}>15.8931</Mark></Scale>
            <PaneTitle>rsi div1: rsi Ma (0.00) 41.1410 41.1410 41.1410 41.1410 35.3632 30.9316</PaneTitle>
          </Pane>
          <Pane><Plot viewBox="42 437 691 4" /></Pane>
          <Pane $last>
            <BspPlot />
            <Scale><Mark $top={20}>0.0003</Mark><Mark $top={80}>0</Mark></Scale>
            <PaneTitle $top={1}>bsp o1 M5 Buy press of EMA Sell press of EMA (35 35) 0.0001 0.0001 0.0002 0.0002</PaneTitle>
          </Pane>
          <TimeAxis>{times.map((t) => <span key={t}>{t}</span>)}</TimeAxis>
        </ChartFrame>

        <Sheets>
          <Sheet $active>EURCAD,M5</Sheet>
          <Sheet>AUDCHF,M5</Sheet>
          <Sheet>EURCAD,M1</Sheet>
          <Scrollers><button aria-label="Scroll left">‹</button><button aria-label="Scroll right">›</button></Scrollers>
        </Sheets>
        <Status>
          <Cell $first>For Help, press F1</Cell>
          <Cell>M1 ULTIMATE 1</Cell>
          <Cell>2023.03.01 08:15</Cell>
          <Cell>O: 1.44248</Cell>
          <Cell>H: 1.44256</Cell>
          <Cell>L: 1.44234</Cell>
          <Cell>C: 1.44255</Cell>
          <Cell>V: 252
            <Connection>
              <svg width="13" height="7" viewBox="0 0 13 7"><path d="M0 0h13L0 6z" fill="#8ba644" /><path d="M13 0v7H0V6z" fill="#2c6684" /><path d="M2.500 0v7M5 0v7M7.500 0v7M10 0v7" stroke="#dde5d8" strokeWidth=".6" /></svg>
              157066/131 kb
            </Connection>
            <Grip width="9" height="9" viewBox="0 0 9 9"><path d="M1 9l8-8M4 9l5-5M7 9l2-2" stroke="#999" /></Grip>
          </Cell>
        </Status>
      </Terminal>
    </>
  );
}
